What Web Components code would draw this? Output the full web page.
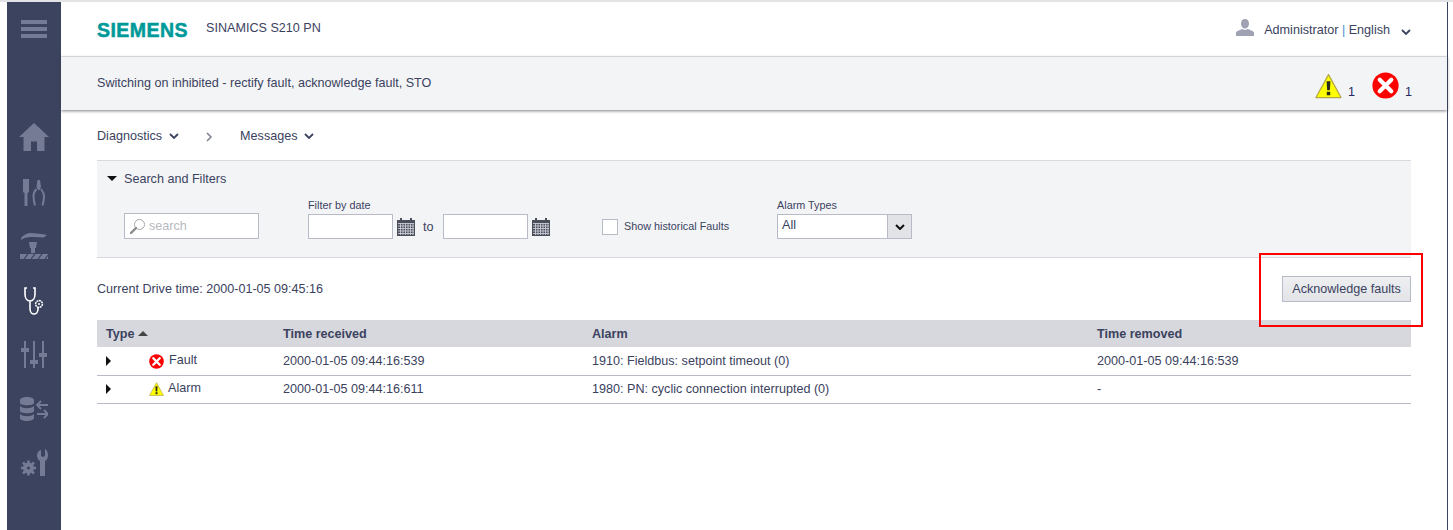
<!DOCTYPE html>
<html><head><meta charset="utf-8">
<style>
html,body{margin:0;padding:0;background:#fff}
body{font:12.6px "Liberation Sans",Arial,sans-serif;color:#3b4260;width:1453px;height:530px;overflow:hidden}
</style></head><body>
<x-app></x-app>
<script>
const def=(name,html)=>{customElements.define(name,class extends HTMLElement{constructor(){super();this.attachShadow({mode:'open'}).innerHTML=html;}});};
const chev=(w=10,h=6,c='#3b4260',sw=1.8)=>`<svg width="${w}" height="${h}" viewBox="0 0 10 6"><path d="M1 1l4 4 4-4" fill="none" stroke="${c}" stroke-width="${sw}"/></svg>`;
const warn=(w,h)=>`<svg width="${w}" height="${h}" viewBox="0 0 28 26"><path d="M14 1.200L27 25H1z" fill="#ff0" stroke="#b5a64a" stroke-width="1.300" stroke-linejoin="round"/><path d="M12 8h4l-.6 9.500h-2.800z" fill="#2a2a1a"/><rect x="12.200" y="19" width="3.600" height="3.600" fill="#2a2a1a"/></svg>`;
const err=(s)=>`<svg width="${s}" height="${s}" viewBox="0 0 28 28"><circle cx="14" cy="14" r="13.600" fill="#f00"/><path d="M8 8l12 12M20 8L8 20" stroke="#fff" stroke-width="4.400" stroke-linecap="round"/></svg>`;
const cal=`<svg width="18" height="18" viewBox="0 0 18 18"><rect x="0" y="2" width="18" height="16" fill="#4b4f5c"/><rect x="3" y="0" width="2" height="3" fill="#4b4f5c"/><rect x="13" y="0" width="2" height="3" fill="#4b4f5c"/><path d="M1 5.500h16M1 8h16M1 10.500h16M1 13h16M1 15.500h16M3.500 5v12M6 5v12M8.500 5v12M11 5v12M13.500 5v12M16 5v12" stroke="#c9ccd4" stroke-width=".9" fill="none"/></svg>`;

def('x-side-item',`<style>:host{display:flex;align-items:center;justify-content:center;height:54.3px}</style><slot></slot>`);
const G='#757b95';
def('x-sidebar',`<style>
:host{display:block;width:54px;background:#3b435f;flex:none;height:528px}
.m{display:flex;justify-content:center;height:54px;align-items:center;margin-bottom:54px}
.n{display:block}
svg{display:block}
</style>
<div class="m"><svg width="26" height="18" viewBox="0 0 26 18"><path d="M0 0h26v4H0zM0 7h26v4H0zM0 14h26v4H0z" fill="${G}"/></svg></div>
<div class="n">
<x-side-item><svg width="30" height="28" viewBox="0 0 30 28"><path d="M15 0L0 14h4.500v14h7.500v-9.500h6V28h7.500V14H30z" fill="${G}"/></svg></x-side-item>
<x-side-item><svg width="24" height="27" viewBox="0 0 24 27" style="margin-top:2px"><path d="M1 0h6v13l-1.500 1v13h-3V14L1 13z" fill="${G}"/><path d="M15.500 1h2.500l1 7-1.500 3h-1.500l-1.500-3z" fill="${G}"/><path d="M14.500 10c-2 2-3 4-3 7 0 3 .5 6 1.500 9.500M19 10c1.500 2 3 4 3 7 0 3-.5 6-1.500 9.500" fill="none" stroke="${G}" stroke-width="2"/></svg></x-side-item>
<x-side-item><svg width="28" height="27" viewBox="0 0 28 27"><path d="M1 6C3 3 7 1 11 1l11 1 5 1-3 2.500-10-.5C9 5 5 5 1 8z" fill="${G}"/><path d="M9 10h8l-1 6h-6zM11 16h4v5h-4z" fill="${G}"/><rect x="0" y="22" width="28" height="5" fill="${G}"/><path d="M4 27l4-5M11 27l4-5M18 27l4-5M25 27l3-4" stroke="#3b435f" stroke-width="1.200"/></svg></x-side-item>
<x-side-item><svg width="20" height="28" viewBox="0 0 20 28" style="margin-top:2px"><path d="M3 1H1v6c0 4 2 7 5 7s5-3 5-7V1H9M6 14v8c0 3 2 5 4 5s4-2 4-5v-2" fill="none" stroke="#fff" stroke-width="1.600"/><circle cx="15" cy="17" r="3.400" fill="none" stroke="#fff" stroke-width="1.500" stroke-dasharray="2 .6"/><circle cx="15" cy="17" r="1" fill="#fff"/></svg></x-side-item>
<x-side-item><svg width="26" height="28" viewBox="0 0 26 28"><path d="M3 1h2v27H3zM12 1h2v27h-2zM21 1h2v27h-2z" fill="${G}"/><rect x="0" y="8" width="8" height="4" fill="${G}"/><rect x="9" y="20" width="8" height="4" fill="${G}"/><rect x="18" y="13" width="8" height="4" fill="${G}"/></svg></x-side-item>
<x-side-item><svg width="28" height="24" viewBox="0 0 28 24"><path d="M0 3c0-4 14-4 14 0v3c0 3-14 3-14 0zM0 9c3 3 11 3 14 0v5c0 3-14 3-14 0zM0 17c3 3 11 3 14 0v4c0 4-14 4-14 0z" fill="${G}"/><path d="M28 8H18M21 4l-4 4 4 4M17 17h10M24 13l4 4-4 4" fill="none" stroke="${G}" stroke-width="1.800"/></svg></x-side-item>
<x-side-item><svg width="28" height="27" viewBox="0 0 28 27"><path d="M21 1v6l2 1 2-1V0c2 1 3 4 3 6 0 3-1 5-3 6v15h-5V12c-2-1-3-3-3-6 0-2 2-5 4-5z" fill="${G}"/><circle cx="8.500" cy="19" r="3.500" fill="none" stroke="${G}" stroke-width="4"/><path d="M8.500 11.500v3M8.500 23.500v3M1 19h3M13 19h3M3 13.500l2 2M12 22.500l2 2M3 24.500l2-2M12 15.500l2-2" stroke="${G}" stroke-width="2.600"/></svg></x-side-item>
</div>`);

def('x-header',`<style>
:host{display:flex;align-items:center;height:54px;border-bottom:1px solid #e6e7ea;padding:0 36px;box-sizing:content-box}
.logo{font:bold 19.500px "Liberation Sans",Arial,sans-serif;color:#009999;letter-spacing:.45px;width:109px;margin-top:3px;-webkit-text-stroke:.5px #009999}
.p{margin-top:-2px}
.sp{flex:1}
.u{display:flex;align-items:center;gap:10px;margin-top:2px}
.bar{color:#3b8fd0}
svg{display:block}
</style>
<span class="logo">SIEMENS</span><span class="p">SINAMICS S210 PN</span><span class="sp"></span>
<div class="u"><svg width="18" height="17" viewBox="0 0 18 17" style="margin-top:-5px"><path d="M9 0c2.500 0 4 2 4 4.500S11.500 9.500 9 9.500 5 7 5 4.500 6.500 0 9 0zM0 17v-3c0-2 4-3 6-4l3 1 3-1c2 1 6 2 6 4v3z" fill="#9ea2b3"/></svg><span>Administrator <span class="bar">|</span> English</span><span style="margin-left:1px;margin-top:3px">${chev(10,6)}</span></div>`);

def('x-status',`<style>
:host{display:flex;align-items:center;height:53px;background:#f3f4f6;padding:0 35px 0 36px;box-shadow:0 1px 3px rgba(60,60,70,.65);position:relative}
.t{flex:1;margin-top:-1px}
.w{display:flex;align-items:flex-end;gap:6px;margin-top:3px}
.w b{font-weight:normal;line-height:13px;color:#1f2a60}
svg{display:block}
</style><span class="t">Switching on inhibited - rectify fault, acknowledge fault, STO</span>
<span class="w" style="margin-top:4px">${warn(27,26)}<b>1</b></span><span class="w" style="margin-left:17px">${err(27)}<b>1</b></span>`);

def('x-crumbs',`<style>
:host{display:flex;align-items:center;height:24px}
.a{display:flex;align-items:center;gap:7px}
svg{display:block}
</style><span class="a">Diagnostics ${chev(10,6)}</span>
<span style="margin:2px 0 0 27px"><svg width="7" height="10" viewBox="0 0 7 10"><path d="M1 1l4 4-4 4" fill="none" stroke="#7f8496" stroke-width="1.600"/></svg></span>
<span class="a" style="margin-left:27px;gap:6px">Messages ${chev(10,6)}</span>`);

def('x-field',`<style>
:host{display:flex;flex-direction:column;flex:none}
.l{font-size:10.800px;line-height:12px;height:12px;margin-bottom:3px}
</style><div class="l"><slot name="label"></slot></div><slot></slot>`);
def('x-input',`<style>
:host{display:flex;align-items:center;box-sizing:border-box;height:25px;width:85px;background:#fff;border:1px solid #b8bac8;flex:none}
</style><slot></slot>`);

def('x-filters',`<style>
:host{display:block;height:96px;background:#f3f4f6;border-top:1px solid #d8d9de;border-bottom:1px solid #d8d9de}
.h{display:flex;align-items:center;gap:7px;height:35px;padding-left:10px}
.tri{width:0;height:0;border-left:5px solid transparent;border-right:5px solid transparent;border-top:5px solid #111}
.r{display:flex;align-items:flex-end;padding:3px 0 0 27px;height:40px}
.cal{margin-left:4px;height:18px;margin-bottom:3px}
svg{display:block}
.to{margin:0 9.500px 5px 8px;line-height:14px}
.ph{color:#b7b9c0;margin-left:3px}
.cb{width:16px;height:16px;box-sizing:border-box;border:1px solid #b8bac8;background:#fff;flex:none}
.chk{display:flex;align-items:center;gap:6px;font-size:10.800px;margin:0 48px 4px 52px}
.chk span:last-child{margin-top:-2px}
.sel{width:135px;display:flex;padding:0;align-items:stretch}
.sel span{flex:1;padding-left:4px;line-height:21px}
.sel i{width:23px;background:#e2e3e7;border-left:1px solid #b8bac8;display:flex;align-items:center;justify-content:center}
</style>
<div class="h"><span class="tri"></span><span>Search and Filters</span></div>
<div class="r">
<x-input style="width:135px;height:26px;margin-right:49px;padding-left:4px"><svg width="17" height="17" viewBox="0 0 17 17"><circle cx="10.500" cy="6.500" r="5" fill="#fff" stroke="#a8a8a8" stroke-width="1"/><path d="M7 10l-5 5" stroke="#8a8a8a" stroke-width="2.400" stroke-linecap="round"/></svg><span class="ph">search</span></x-input>
<x-field><span slot="label">Filter by date</span><x-input></x-input></x-field>
<span class="cal">${cal}</span><span class="to">to</span>
<x-input></x-input><span class="cal">${cal}</span>
<div class="chk"><span class="cb"></span><span>Show historical Faults</span></div>
<x-field><span slot="label">Alarm Types</span><x-input style="width:135px"><div class="sel" style="width:100%;height:100%"><span>All</span><i>${chev(10,6,'#111',2)}</i></div></x-input></x-field>
</div>`);

def('x-toolbar',`<style>
:host{display:flex;align-items:center;justify-content:space-between;height:62px}
button{font:12.600px "Liberation Sans",Arial,sans-serif;color:#3b4260;height:26px;width:129px;padding:0;box-sizing:border-box;border:1px solid #b8bac8;background:linear-gradient(#eeeff1,#e3e4e8);margin:0}
</style><span>Current Drive time: 2000-01-05 09:45:16</span><button>Acknowledge faults</button>`);

def('x-row',`<style>
:host{display:grid;grid-template-columns:186px 309px 505px 1fr;align-items:center;height:28px;box-sizing:border-box;border-bottom:1px solid #b8bac8}
:host(:first-child){height:29px}
:host(:last-child){padding-bottom:2px}
.c1{display:flex;align-items:center;padding-left:9px;height:100%}
.tri{width:0;height:0;border-top:5px solid transparent;border-bottom:5px solid transparent;border-left:5px solid #111;margin-right:38px}
.ty{margin-left:4px;margin-top:-2px}
</style><div class="c1"><span class="tri"></span><slot name="ic"></slot><span class="ty"><slot name="type"></slot></span></div><span><slot name="a"></slot></span><span><slot name="b"></slot></span><span><slot name="c"></slot></span>`);
def('x-table',`<style>
:host{display:block}
.hd{display:grid;grid-template-columns:186px 309px 505px 1fr;align-items:center;height:27px;background:#d7d8dd;font-weight:bold}
.hd span:first-child{padding-left:9px;display:flex;align-items:center;gap:4px}
.up{width:0;height:0;border-left:5.500px solid transparent;border-right:5.500px solid transparent;border-bottom:5px solid #444}
</style><div class="hd"><span>Type <i class="up"></i></span><span>Time received</span><span>Alarm</span><span>Time removed</span></div><slot></slot>`);

def('x-app',`<style>
:host{display:flex;align-items:flex-start;height:530px;position:relative;border-top:2px solid #e4e4e6;box-sizing:border-box;padding-left:7px}
main{width:1386px;height:528px;flex:none;border-right:1px solid #3b435f}
.c{padding:0 36px;margin-top:14px}
x-filters{margin-top:12px}
.box{position:absolute;left:1259px;top:251px;width:164px;height:74px;border:2px solid #f00;box-sizing:border-box}
span[slot=ic]{margin-right:1px}
span[slot=ic] svg{display:block}
</style>
<x-sidebar></x-sidebar>
<main>
<x-header></x-header><x-status></x-status>
<div class="c">
<x-crumbs></x-crumbs>
<x-filters></x-filters>
<x-toolbar></x-toolbar>
<x-table>
<x-row><span slot="ic">${err(15)}</span><span slot="type">Fault</span><span slot="a">2000-01-05 09:44:16:539</span><span slot="b">1910: Fieldbus: setpoint timeout (0)</span><span slot="c">2000-01-05 09:44:16:539</span></x-row>
<x-row><span slot="ic" style="margin-right:0">${warn(15,14)}</span><span slot="type">Alarm</span><span slot="a">2000-01-05 09:44:16:611</span><span slot="b">1980: PN: cyclic connection interrupted (0)</span><span slot="c">-</span></x-row>
</x-table>
</div>
</main>
<div class="box"></div>`);
</script>
</body></html>
